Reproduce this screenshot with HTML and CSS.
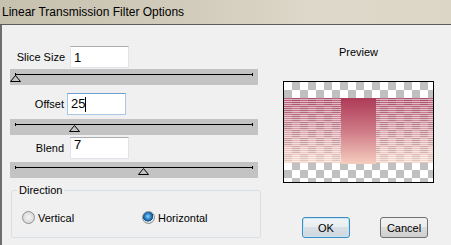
FILE: index.html
```html
<!DOCTYPE html>
<html lang="en">
<head>
  <meta charset="UTF-8">
  <title>Linear Transmission Filter Options</title>
  <link rel="stylesheet" href="styles.css">
</head>
<body>
  <div class="titlebar">Linear Transmission Filter Options</div>
  <div class="content">
    <div class="left">
      <div class="row row-slice">
        <label class="label">Slice Size</label>
        <input class="field" type="text" value="1">
      </div>
      <div class="slider">
        <div class="track"></div>
        <svg class="thumb" style="left: 0px;" width="11" height="7" viewBox="0 0 11 7"><polygon points="5.5,0.5 10.5,6.5 0.5,6.5" fill="none" stroke="#000"/></svg>
      </div>

      <div class="row row-offset">
        <label class="label">Offset</label>
        <div class="field focused">25<span class="caret"></span></div>
      </div>
      <div class="slider">
        <div class="track"></div>
        <svg class="thumb" style="left: 59px;" width="11" height="7" viewBox="0 0 11 7"><polygon points="5.5,0.5 10.5,6.5 0.5,6.5" fill="none" stroke="#000"/></svg>
      </div>

      <div class="row row-blend">
        <label class="label">Blend</label>
        <input class="field field-top" type="text" value="7">
      </div>
      <div class="slider">
        <div class="track"></div>
        <svg class="thumb" style="left: 128px;" width="11" height="7" viewBox="0 0 11 7"><polygon points="5.5,0.5 10.5,6.5 0.5,6.5" fill="none" stroke="#000"/></svg>
      </div>

      <fieldset class="group">
        <legend>Direction</legend>
        <div class="radios">
          <label class="radio"><span class="dot"></span>Vertical</label>
          <label class="radio"><span class="dot checked"></span>Horizontal</label>
        </div>
      </fieldset>
    </div>

    <div class="right">
      <div class="preview-wrap">
        <div class="preview-title">Preview</div>
        <div class="preview">
          <div class="stripes"></div>
          <div class="solid"></div>
        </div>
      </div>
      <div class="buttons">
        <button class="btn default">OK</button>
        <button class="btn">Cancel</button>
      </div>
    </div>
  </div>
</body>
</html>
```
FILE: styles.css
```css
html, body { margin: 0; padding: 0; }
body { width: 451px; height: 245px; overflow: hidden; background: #f0f0f0; font-family: "Liberation Sans", Arial, sans-serif; font-size: 11px; color: #000; }

.titlebar { height: 24px; line-height: 24px; padding-left: 2px; font-size: 12px; border-bottom: 1px solid #5c5c5c; background: linear-gradient(to right, #c6c0af, #d3cdbd 45%, #ddd8c9 70%, #dcd6c7); }

.content { display: flex; height: 220px; border-left: 2px solid #6e6e6e; }
.left { width: 260px; padding-top: 21px; }
.right { flex: 1; padding-top: 21px; }

.row { display: flex; align-items: center; height: 22px; }
.label { width: 62px; text-align: right; }
.row-slice .label { width: 63px; }
.row-slice .field { margin-left: 5px; }
.row-offset { margin-top: 8px; }
.row-offset .field { margin-left: 3px; }
.row-blend { margin-top: 2px; }
.row-blend .field { margin-left: 6px; }

.field { box-sizing: border-box; width: 59px; height: 22px; padding: 0 3px; border: 1px solid #e2e3ea; border-top-color: #abadb3; background: #fff; font-family: "Liberation Sans", Arial, sans-serif; font-size: 13px; line-height: 20px; outline: none; }
.field.focused { border-color: #a9c8e8; border-top-color: #6e9fd4; display: flex; align-items: center; }
.field-top { padding-bottom: 8px; }
.caret { display: inline-block; width: 1px; height: 15px; background: #000; }

.slider { position: relative; height: 16px; margin: 1px 0 0 8px; width: 248px; background: #c3c3c3; }
.track { position: absolute; left: 5px; right: 5px; top: 5px; height: 1px; background: #000; }
.track::before, .track::after { content: ""; position: absolute; top: -1px; width: 1px; height: 3px; background: #000; }
.track::before { left: 0; }
.track::after { right: 0; }
.thumb { position: absolute; top: 6px; }
.row-offset + .slider { margin-top: 4px; }
.row-blend + .slider { margin-top: 3px; }

.group { margin: 6px 0 0 9px; width: 250px; box-sizing: border-box; padding: 0 5px 13px; border: 1px solid #d5dfe5; border-radius: 3px; }
.group legend { padding: 0 2px; line-height: 13px; }
.radios { display: flex; margin-top: 14px; padding-left: 5px; }
.radio { display: flex; align-items: center; height: 13px; }
.radio:first-child { width: 120px; }
.dot { box-sizing: border-box; width: 13px; height: 13px; margin-right: 3px; border-radius: 50%; border: 1px solid #8e8f8f; background: radial-gradient(circle at 50% 50%, #f4f4f4 0, #e0e0e0 55%, #cfcfcf 100%); }
.dot.checked { background: radial-gradient(circle at 45% 40%, #8fd1f7 0, #2a7fc4 35%, #0d4f8c 55%, #e6e6e6 60%, #cfcfcf 100%); }

.preview-wrap { width: 151px; margin-left: 21px; }
.preview-title { text-align: center; line-height: 13px; }
.preview { position: relative; box-sizing: border-box; width: 151px; height: 102px; margin-top: 22px; border: 1px solid #000; background: repeating-conic-gradient(#c0c0c0 0 25%, #fff 0 50%) 0 0 / 16px 16px; }
.stripes { position: absolute; left: 0; right: 0; top: 16px; height: 65px; background: repeating-linear-gradient(to bottom, transparent 0 1px, rgba(255,255,255,0.55) 1px 2px), linear-gradient(to bottom, rgba(160,40,75,0.75), rgba(190,95,110,0.6) 50%, rgba(245,205,185,0.7)); }
.solid { position: absolute; left: 57px; width: 35px; top: 16px; height: 66px; background: linear-gradient(to bottom, #ad3a58, #cf7a86 50%, #f6cdbf); }

.buttons { display: flex; gap: 30px; margin: 34px 0 0 40px; }
.btn { box-sizing: border-box; width: 48px; height: 21px; padding: 0; border: 1px solid #707070; border-radius: 3px; font-family: "Liberation Sans", Arial, sans-serif; font-size: 11px; color: #000; background: linear-gradient(to bottom, #f2f2f2 0, #ebebeb 50%, #dddddd 50%, #cfcfcf 100%); }
.btn.default { border-color: #3c8cc0; box-shadow: inset 0 0 0 1px #c6e6f5; background: linear-gradient(to bottom, #f0f4f7 0, #e8edf0 50%, #d8e0e5 50%, #cfd8de 100%); }
```
